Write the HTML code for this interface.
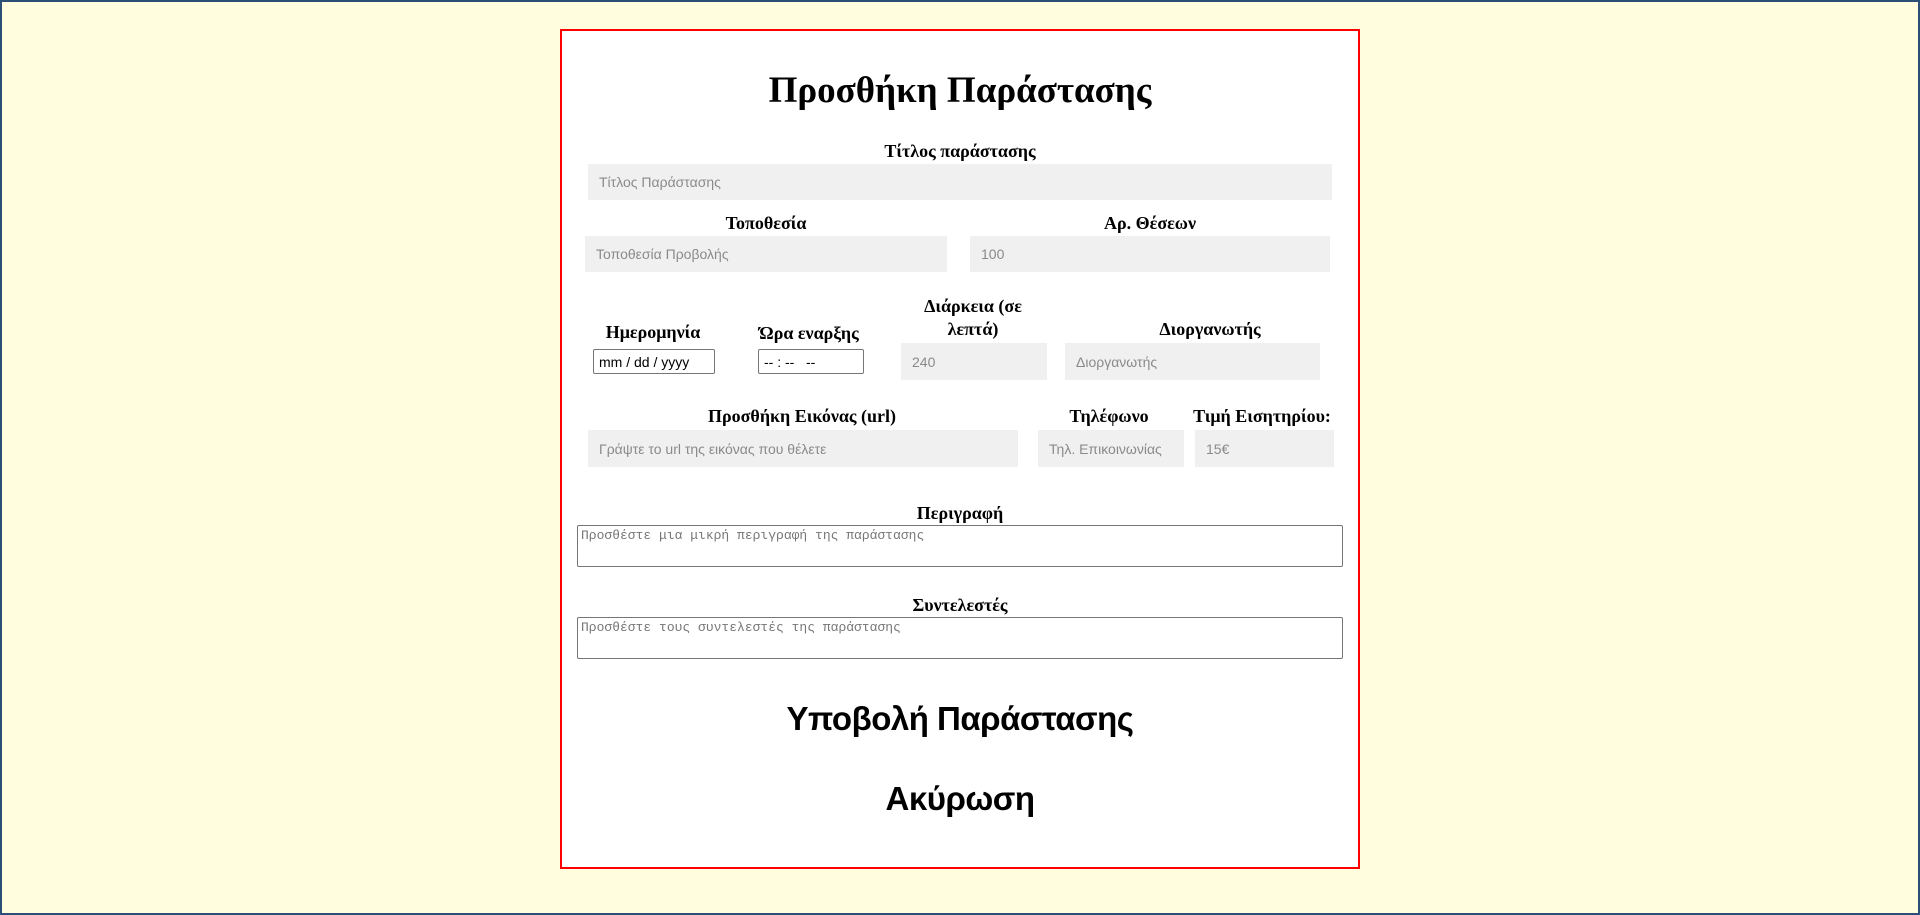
<!DOCTYPE html>
<html><head><meta charset="utf-8"><style>
html,body{margin:0;padding:0}
body{width:1920px;height:915px;background:#fffddd;position:relative;overflow:hidden;font-family:"Liberation Serif","Noto Serif CJK SC",serif}
.frame{position:absolute;left:0;top:0;width:1920px;height:915px;box-sizing:border-box;border:2px solid #2a5078}
.box{position:absolute;left:560px;top:29px;width:796px;height:836px;border:2px solid #ff0000;background:#fff}
.lbl{position:absolute;font-weight:bold;font-size:18px;text-align:center;transform:translateX(-50%);white-space:nowrap;line-height:24px;color:#000}
.in{position:absolute;background:#f0f0f0;color:#8a8a8a;font-family:"Liberation Sans",sans-serif;font-size:14px;box-sizing:border-box;padding-left:11px;display:flex;align-items:center}
.bx{position:absolute;border:1px solid #767676;border-radius:2px;box-sizing:border-box;font-family:"Liberation Sans",sans-serif;font-size:14px;display:flex;align-items:center;padding-left:5px;background:#fff;color:#000}
.ta{position:absolute;border:1px solid #767676;border-radius:2px;box-sizing:border-box;font-family:"Liberation Mono",monospace;font-size:13px;color:#777;padding:2px 3px;background:#fff}
.h{position:absolute;left:0;width:100%;text-align:center;font-weight:bold;color:#000}
</style></head><body>
<div class="frame"></div>
<div class="box"></div>
<div class="h" style="top:68px;font-size:37px;line-height:46px">Προσθήκη Παράστασης</div>
<div class="lbl" style="left:960px;top:139px">Τίτλος παράστασης</div>
<div class="in" style="left:588px;top:164px;width:744px;height:36px">Τίτλος Παράστασης</div>
<div class="lbl" style="left:766px;top:211px">Τοποθεσία</div>
<div class="lbl" style="left:1150px;top:211px">Αρ. Θέσεων</div>
<div class="in" style="left:585px;top:236px;width:362px;height:36px">Τοποθεσία Προβολής</div>
<div class="in" style="left:970px;top:236px;width:360px;height:36px">100</div>
<div class="lbl" style="left:653px;top:320px">Ημερομηνία</div>
<div class="lbl" style="left:809px;top:321px">Ώρα εναρξης</div>
<div class="lbl" style="left:973px;top:295px;line-height:23px;text-align:center">Διάρκεια (σε<br>λεπτά)</div>
<div class="lbl" style="left:1210px;top:317px">Διοργανωτής</div>
<div class="bx" style="left:593px;top:349px;width:122px;height:25px">mm / dd / yyyy</div>
<div class="bx" style="left:758px;top:349px;width:106px;height:25px">-- : --&nbsp;&nbsp;&nbsp;--</div>
<div class="in" style="left:901px;top:343px;width:146px;height:37px">240</div>
<div class="in" style="left:1065px;top:343px;width:255px;height:37px">Διοργανωτής</div>
<div class="lbl" style="left:802px;top:404px">Προσθήκη Εικόνας (url)</div>
<div class="lbl" style="left:1109px;top:404px">Τηλέφωνο</div>
<div class="lbl" style="left:1262px;top:404px">Τιμή Εισητηρίου:</div>
<div class="in" style="left:588px;top:430px;width:430px;height:37px">Γράψτε το url της εικόνας που θέλετε</div>
<div class="in" style="left:1038px;top:430px;width:146px;height:37px">Τηλ. Επικοινωνίας</div>
<div class="in" style="left:1195px;top:430px;width:139px;height:37px">15€</div>
<div class="lbl" style="left:960px;top:501px">Περιγραφή</div>
<div class="ta" style="left:577px;top:525px;width:766px;height:42px">Προσθέστε μια μικρή περιγραφή της παράστασης</div>
<div class="lbl" style="left:960px;top:593px">Συντελεστές</div>
<div class="ta" style="left:577px;top:617px;width:766px;height:42px">Προσθέστε τους συντελεστές της παράστασης</div>
<div class="h" style="top:697px;font-size:33px;line-height:44px;font-family:'Liberation Sans',sans-serif;letter-spacing:-0.5px">Υποβολή Παράστασης</div>
<div class="h" style="top:777px;font-size:33px;line-height:44px;font-family:'Liberation Sans',sans-serif;letter-spacing:-0.5px">Ακύρωση</div>
</body></html>
